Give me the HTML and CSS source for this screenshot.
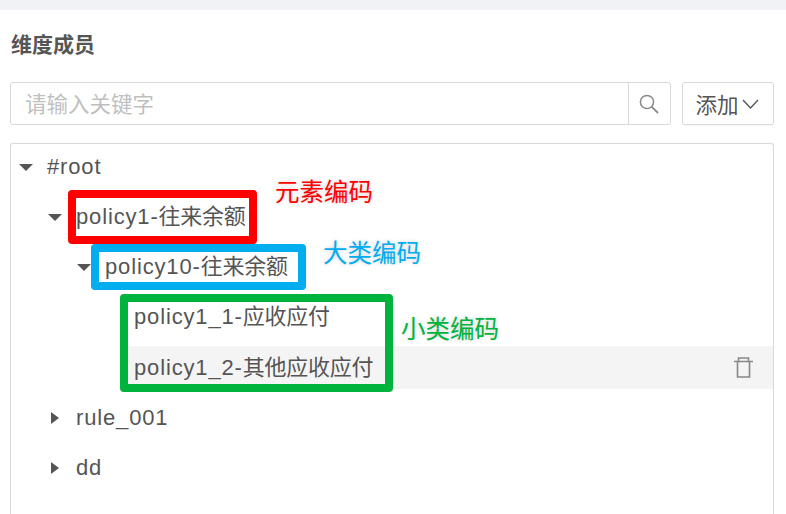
FILE: index.html
```html
<!DOCTYPE html>
<html lang="zh-CN">
    <head>
        <meta charset="UTF-8">
        <meta name="viewport" content="width=device-width,initial-scale=1.0">
        <title>维度成员</title>
        <link rel="stylesheet" href="styles.css">
    </head>
    <body>
        <div class="topbar"></div>
        <main class="panel">
            <h2 class="title">维度成员</h2>
            <div class="toolbar">
                <div class="search">
                    <span class="placeholder">请输入关键字</span>
                    <span class="search-btn">
                        <svg width="22" height="22" viewBox="0 0 22 22" fill="none" stroke="#8a8a8a" stroke-width="1.5">
                            <circle cx="8" cy="9" r="6.6"/>
                            <path d="M12.800 13.800L19 20" stroke-width="1.8"/>
                        </svg>
                    </span>
                </div>
                <button class="add">添加<svg width="17" height="10" viewBox="0 0 17 10" fill="none" stroke="#555" stroke-width="1.4"><path d="M1 1l7.500 8 7.500-8"/></svg></button>
            </div>
            <div class="tree">
                <div class="row"><i class="caret down"></i><span>#root</span></div>
                <div class="row lv1"><i class="caret down"></i><span>policy1-<b>往来余额</b></span></div>
                <div class="row lv2"><i class="caret down"></i><span>policy10-<b>往来余额</b></span></div>
                <div class="row lv3"><span>policy1_1-<b>应收应付</b></span></div>
                <div class="row lv3 active"><span>policy1_2-<b>其他应收应付</b></span>
                    <svg class="trash" width="20" height="21" viewBox="0 0 20 21" fill="none" stroke="#888" stroke-width="1.6">
                        <path d="M0 4.500h19M4.500 4.500V1h10v3.500M3.500 4.500v15.500h12V4.500"/>
                    </svg>
                </div>
                <div class="row lv1"><i class="caret right"></i><span>rule_001</span></div>
                <div class="row lv1"><i class="caret right"></i><span>dd</span></div>
            </div>
        </main>
        <div class="mark mark-red"></div>
        <div class="mark mark-blue"></div>
        <div class="mark mark-green"></div>
        <span class="note note-red">元素编码</span>
        <span class="note note-blue">大类编码</span>
        <span class="note note-green">小类编码</span>
    </body>
</html>
```

FILE: styles.css
```css
*{
    margin: 0;
    padding: 0;
    box-sizing: border-box;
}
body{
    height: 100vh;
    overflow: hidden;
    background-color: #fff;
    color: #555;
    font-family: "Liberation Sans", "Noto Sans CJK SC", sans-serif;
    font-size: 22px;
}
.topbar{
    height: 10px;
    background-color: #f0f2f5;
}
.panel{
    padding: 0 12px 0 10px;
}
.title{
    font-size: 21px;
    line-height: 24px;
    font-weight: bold;
    color: #555;
    margin: 23px 0 25px 1px;
}
.toolbar{
    display: flex;
    gap: 11px;
    height: 43px;
    margin-bottom: 18px;
}
.search{
    flex: 1;
    display: flex;
    align-items: center;
    border: 1px solid #d9d9d9;
    border-radius: 3px;
}
.placeholder{
    flex: 1;
    padding-left: 14px;
    padding-bottom: 2px;
    font-size: 21.500px;
    color: #bfbfbf;
}
.search-btn{
    width: 42px;
    height: 100%;
    display: flex;
    align-items: center;
    justify-content: center;
    border-left: 1px solid #d9d9d9;
}
.add{
    width: 92px;
    display: flex;
    align-items: center;
    justify-content: center;
    gap: 3px;
    padding-right: 2px;
    background-color: #fff;
    border: 1px solid #d9d9d9;
    border-radius: 3px;
    box-shadow: 0 1px 2px rgba(0,0,0,.04);
    color: #555;
    font-family: inherit;
    font-size: 21.500px;
}
.tree{
    height: calc(100vh - 143px);
    padding-top: 1px;
    border: 1px solid #d9d9d9;
    border-bottom: none;
    border-radius: 3px 3px 0 0;
    overflow: hidden;
}
.row{
    height: 43px;
    margin-bottom: 7.330px;
    padding-left: 8px;
    display: flex;
    align-items: center;
    line-height: 24px;
    white-space: nowrap;
    letter-spacing: .85px;
}
.row b{
    font-weight: normal;
    line-height: 0;
    letter-spacing: -0.250px;
}
.lv1{
    padding-left: 37px;
}
.lv2{
    padding-left: 66px;
}
.lv3{
    margin-left: 110px;
    padding-left: 13px;
}
.active{
    background-color: #f4f4f4;
}
.caret{
    width: 28px;
    height: 12px;
    flex: none;
    position: relative;
}
.caret.down::before{
    content: "";
    position: absolute;
    left: 0;
    top: 3px;
    border-style: solid;
    border-width: 7px 7px 0;
    border-color: #555 transparent transparent;
}
.caret.right::before{
    content: "";
    position: absolute;
    left: 3px;
    top: 0;
    border-style: solid;
    border-width: 6px 0 6px 8px;
    border-color: transparent transparent transparent #555;
}
.trash{
    margin-left: auto;
    margin-right: 19px;
}
/* hand-drawn annotations on top of the screenshot */
.mark{
    position: absolute;
    border-style: solid;
    border-width: 8px;
    border-radius: 4px;
}
.mark-red{
    left: 68px;
    top: 190px;
    width: 189px;
    height: 54px;
    border-color: #fe0000;
}
.mark-blue{
    left: 91px;
    top: 244px;
    width: 215px;
    height: 46px;
    border-color: #00aeef;
}
.mark-green{
    left: 120px;
    top: 294px;
    width: 273px;
    height: 98px;
    border-color: #00b33c;
}
.note{
    position: absolute;
    font-size: 24.500px;
    line-height: 28px;
    text-shadow: 0 0 4px #ccc;
}
.note-red{
    left: 275px;
    top: 179px;
    color: #fe0000;
}
.note-blue{
    left: 323px;
    top: 240px;
    color: #00aeef;
}
.note-green{
    left: 401px;
    top: 316px;
    color: #00b33c;
}
```
